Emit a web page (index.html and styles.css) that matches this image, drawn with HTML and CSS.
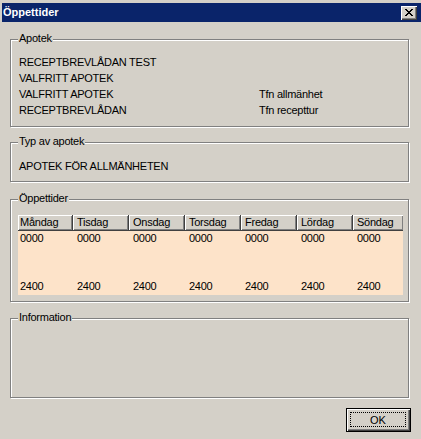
FILE: index.html
```html
<!DOCTYPE html>
<html>
<head>
<meta charset="utf-8">
<link rel="stylesheet" href="styles.css">
</head>
<body>
<div class="window">
  <div class="titlebar">
    <span class="title">Öppettider</span>
    <span class="close">
      <svg width="8" height="7" viewBox="0 0 8 7" shape-rendering="crispEdges">
        <path d="M0 0h2v1h-2z M6 0h2v1h-2z M1 1h2v1h-2z M5 1h2v1h-2z M2 2h4v1h-4z M3 3h2v1h-2z M2 4h4v1h-4z M1 5h2v1h-2z M5 5h2v1h-2z M0 6h2v1h-2z M6 6h2v1h-2z" fill="#000"/>
      </svg>
    </span>
  </div>
  <div class="content">
    <div class="group g-apotek">
      <span class="legend">Apotek</span>
      <div class="rows">
        <span>RECEPTBREVLÅDAN TEST</span><span></span>
        <span>VALFRITT APOTEK</span><span></span>
        <span>VALFRITT APOTEK</span><span>Tfn allmänhet</span>
        <span>RECEPTBREVLÅDAN</span><span>Tfn recepttur</span>
      </div>
    </div>
    <div class="group g-typ">
      <span class="legend">Typ av apotek</span>
      <div class="line">APOTEK FÖR ALLMÄNHETEN</div>
    </div>
    <div class="group g-tider">
      <span class="legend">Öppettider</span>
      <div class="table">
        <div class="hcell first">Måndag</div>
        <div class="hcell">Tisdag</div>
        <div class="hcell">Onsdag</div>
        <div class="hcell">Torsdag</div>
        <div class="hcell">Fredag</div>
        <div class="hcell">Lördag</div>
        <div class="hcell last">Söndag</div>
        <div class="dcell first"><span>0000</span><span>2400</span></div>
        <div class="dcell"><span>0000</span><span>2400</span></div>
        <div class="dcell"><span>0000</span><span>2400</span></div>
        <div class="dcell"><span>0000</span><span>2400</span></div>
        <div class="dcell"><span>0000</span><span>2400</span></div>
        <div class="dcell"><span>0000</span><span>2400</span></div>
        <div class="dcell"><span>0000</span><span>2400</span></div>
      </div>
    </div>
    <div class="group g-info">
      <span class="legend">Information</span>
    </div>
    <div class="footer">
      <button class="btn"><span class="focus">OK</span></button>
    </div>
  </div>
</div>
</body>
</html>
```
FILE: styles.css
```css
html, body {
  margin: 0;
  padding: 0;
  background: #d4d0c8;
}
body {
  font: 11px "Liberation Sans", Arial, sans-serif;
  letter-spacing: -0.25px;
  color: #000;
  overflow: hidden;
}
.window {
  padding: 3px 0 0 2px;
}
.titlebar {
  height: 19px;
  background: #0a246a;
  color: #fff;
  display: flex;
  align-items: center;
  justify-content: space-between;
  padding: 0 4px 0 1px;
}
.title {
  font-weight: bold;
  font-size: 11px;
  letter-spacing: 0;
  line-height: 13px;
}
.close {
  width: 16px;
  height: 14px;
  margin-top: 1px;
  background: #d4d0c8;
  box-shadow: inset 1px 1px 0 #fff, inset -1px -1px 0 #404040, inset -2px -2px 0 #808080;
  display: flex;
  align-items: center;
  justify-content: center;
  padding-bottom: 1px;
  box-sizing: border-box;
}
.close svg {
  display: block;
  margin-left: -1px;
}
.content {
  padding-left: 8px;
}
.group {
  position: relative;
  box-sizing: border-box;
  width: 399px;
  border: 1px solid #808080;
  box-shadow: inset 1px 1px 0 #fff, 1px 1px 0 #fff;
}
.legend {
  position: absolute;
  top: -8px;
  left: 7px;
  padding: 0 1px;
  line-height: 13px;
  background: #d4d0c8;
}
.g-apotek {
  margin-top: 17px;
  height: 88px;
  padding: 14px 0 0 8px;
}
.rows {
  display: grid;
  grid-template-columns: 240px auto;
  line-height: 16px;
}
.g-typ {
  margin-top: 15px;
  height: 40px;
  padding: 15px 0 0 8px;
}
.line {
  line-height: 16px;
}
.g-tider {
  margin-top: 17px;
  height: 103px;
  padding: 15px 0 0 7px;
}
.table {
  display: grid;
  grid-template-columns: 55px 56px 56px 56px 56px 56px 50px;
  width: 385px;
}
.hcell {
  height: 16px;
  box-sizing: border-box;
  padding-left: 4px;
  line-height: 14px;
  border-right: 1px solid #404040;
  border-bottom: 1px solid #404040;
  box-shadow: inset 1px 1px 0 #fff, inset -1px -1px 0 #808080;
}
.hcell.first {
  padding-left: 2px;
}
.hcell.last {
  border-right: none;
}
.dcell {
  height: 64px;
  background: #fde3c9;
  padding: 0 0 2px 4px;
  display: flex;
  flex-direction: column;
  justify-content: space-between;
  line-height: 14px;
  box-sizing: border-box;
}
.dcell.first {
  padding-left: 2px;
}
.g-info {
  margin-top: 16px;
  height: 80px;
}
.footer {
  width: 401px;
  display: flex;
  justify-content: flex-end;
  margin-top: 10px;
}
.btn {
  width: 65px;
  height: 24px;
  padding: 0;
  margin: 0;
  border: 1px solid #000;
  background: #d4d0c8;
  box-shadow: inset 1px 1px 0 #fff, inset -1px -1px 0 #404040, inset -2px -2px 0 #808080;
  display: flex;
  align-items: stretch;
  justify-content: stretch;
  font: 11px "Liberation Sans", Arial, sans-serif;
  color: #000;
}
.focus {
  flex: 1;
  margin: 3px 4px 4px 3px;
  border: 1px dotted #000;
  display: flex;
  align-items: center;
  justify-content: center;
}
```
